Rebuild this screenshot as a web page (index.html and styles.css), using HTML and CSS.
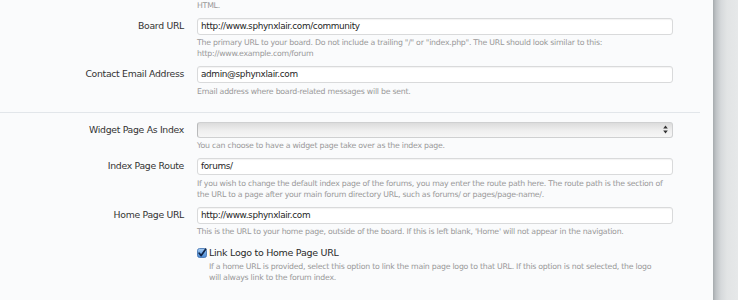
FILE: index.html
```html
<!DOCTYPE html>
<html lang="en">
<head>
<meta charset="utf-8">
<title>Board Options</title>
<link rel="stylesheet" href="styles.css">
</head>
<body>
<div class="page">
  <main class="form">
    <div class="row lead">
      <div class="label"></div>
      <div class="ctrl"><p class="hint first">HTML.</p></div>
    </div>

    <div class="row">
      <div class="label">Board URL</div>
      <div class="ctrl">
        <div class="input">http://www.sphynxlair.com/community</div>
        <p class="hint">The primary URL to your board. Do not include a trailing "/" or "index.php". The URL should look similar to this:<br>http://www.example.com/forum</p>
      </div>
    </div>

    <div class="row">
      <div class="label">Contact Email Address</div>
      <div class="ctrl">
        <div class="input">admin@sphynxlair.com</div>
        <p class="hint">Email address where board-related messages will be sent.</p>
      </div>
    </div>

    <hr class="divider">

    <div class="row">
      <div class="label">Widget Page As Index</div>
      <div class="ctrl">
        <div class="select">
          <svg class="arrows" width="5" height="9" viewBox="0 0 5 9"><path d="M2.5 0.5 L4.8 3.6 L0.2 3.6 Z M2.5 8.5 L4.8 5.4 L0.2 5.4 Z" fill="#333"/></svg>
        </div>
        <p class="hint">You can choose to have a widget page take over as the index page.</p>
      </div>
    </div>

    <div class="row">
      <div class="label">Index Page Route</div>
      <div class="ctrl">
        <div class="input">forums/</div>
        <p class="hint">If you wish to change the default index page of the forums, you may enter the route path here. The route path is the section of<br>the URL to a page after your main forum directory URL, such as forums/ or pages/page-name/.</p>
      </div>
    </div>

    <div class="row">
      <div class="label">Home Page URL</div>
      <div class="ctrl">
        <div class="input">http://www.sphynxlair.com</div>
        <p class="hint">This is the URL to your home page, outside of the board. If this is left blank, 'Home' will not appear in the navigation.</p>
      </div>
    </div>

    <div class="row check-row">
      <div class="label"></div>
      <div class="ctrl">
        <div class="check">
          <svg class="box" width="10" height="10" viewBox="0 0 10 10">
            <defs>
              <linearGradient id="cb" x1="0" y1="0" x2="0" y2="1">
                <stop offset="0" stop-color="#a9cdf2"/>
                <stop offset="0.5" stop-color="#6ea6e2"/>
                <stop offset="1" stop-color="#4c8ad3"/>
              </linearGradient>
            </defs>
            <rect x="0.5" y="0.5" width="9" height="9" rx="2" fill="url(#cb)" stroke="#3c6fae" stroke-width="0.8"/>
            <path d="M2.2 5.2 L4.2 7.6 L8.6 1.2" fill="none" stroke="#0e2447" stroke-width="1.7" stroke-linecap="round" stroke-linejoin="round"/>
          </svg>
          <span class="check-label">Link Logo to Home Page URL</span>
        </div>
        <p class="hint indent">If a home URL is provided, select this option to link the main page logo to that URL. If this option is not selected, the logo<br>will always link to the forum index.</p>
      </div>
    </div>
  </main>
  <div class="edge"></div>
</div>
</body>
</html>
```

FILE: styles.css
```css
html, body {
  margin: 0;
  padding: 0;
  background: #fafbfc;
  overflow: hidden;
}

body {
  font-family: "DejaVu Sans", "Liberation Sans", sans-serif;
  color: #333;
}

.page {
  display: flex;
  height: 300px;
}

.form {
  width: 713px;
  flex: none;
}

.edge {
  flex: 1;
  background: linear-gradient(to right, #a6abae 0, #bfc3c6 3px, #d6d9db 8px, #e2e4e5 14px, #e6e8e9 25px);
}

.row {
  display: grid;
  grid-template-columns: 184px 476px;
  column-gap: 13px;
  margin-top: 7px;
}

.row.lead {
  margin-top: -0.5px;
}

.label {
  text-align: right;
  font-size: 9.3px;
  letter-spacing: -0.3px;
  line-height: 15px;
  color: #333;
  white-space: nowrap;
}

.input {
  box-sizing: border-box;
  height: 17px;
  border: 1px solid #d9dadb;
  border-radius: 3px;
  background: #fff;
  box-shadow: inset 0 1px 1px rgba(0, 0, 0, 0.05);
  padding: 0 3px;
  font-size: 8.9px;
  letter-spacing: -0.35px;
  line-height: 15px;
  color: #1e1e1e;
  white-space: nowrap;
}

.select {
  box-sizing: border-box;
  height: 16px;
  border: 1px solid #cfd0d1;
  border-left-color: #b9babb;
  border-radius: 3px;
  background: linear-gradient(#dcdcdc, #efefef 55%, #f6f6f6);
  display: flex;
  align-items: center;
  justify-content: flex-end;
  padding-right: 4px;
}

.arrows {
  display: block;
}

.hint {
  margin: 2.5px 0 0;
  font-size: 7.8px;
  letter-spacing: -0.25px;
  line-height: 11px;
  color: #999;
  white-space: nowrap;
}

.hint.first {
  margin-top: 0;
}

.hint.indent {
  margin-left: 12px;
  margin-top: 2px;
}

.divider {
  border: 0;
  border-top: 1px solid #e2e6ea;
  width: 700px;
  margin: 15px 0 9px;
  height: 0;
}

.check-row {
  margin-top: 9px;
}

.check {
  display: flex;
  align-items: center;
  gap: 2px;
  height: 13px;
}

.box {
  display: block;
  flex: none;
}

.check-label {
  font-size: 9.5px;
  letter-spacing: -0.28px;
  line-height: 13px;
  color: #2a2a2a;
  white-space: nowrap;
}
```
